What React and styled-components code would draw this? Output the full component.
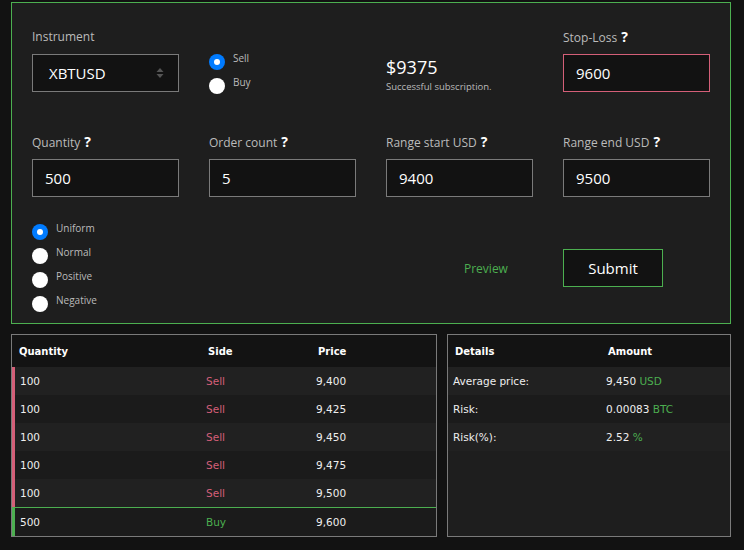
import React from "react";
import styled, { createGlobalStyle } from "styled-components";

const GlobalStyle = createGlobalStyle`
  body {
    margin: 0;
    background-color: #121212;
    font-family: "Open Sans", "Noto Sans", sans-serif;
    color: #eee;
  }
`;

const Page = styled.div`
  padding: 2px 13px 0 11px;
  width: 720px;
`;

const Panel = styled.div`
  border: 1px solid #4caf50;
  background-color: #1e1e1e;
  padding: 25px 20px 7px 20px;
`;

const Row = styled.div`
  display: grid;
  grid-template-columns: repeat(4, 147px);
  column-gap: 30px;
  align-items: start;
  height: ${(props) => (props.h ? `${props.h}px` : "auto")};
  margin-top: ${(props) => props.gap || 0}px;
`;

const Field = styled.div`
  display: flex;
  flex-direction: column;
`;

const Label = styled.div`
  font-size: 12px;
  line-height: 18px;
  height: 18px;
  color: #bbb;
  margin-bottom: 8px;
  white-space: nowrap;
  b {
    color: #fff;
    font-size: 14px;
    font-weight: 700;
    margin-left: 4px;
  }
`;

const Input = styled.div`
  box-sizing: border-box;
  height: 38px;
  border: 1px solid ${(props) => (props.danger ? "#d45f78" : "#7a7a7a")};
  background-color: #121212;
  color: #fff;
  font-size: 15px;
  display: flex;
  align-items: center;
  padding-left: ${(props) => (props.select ? 16 : 12)}px;
  padding-right: 14px;
  justify-content: space-between;
`;

const RadioGroup = styled.div`
  display: flex;
  flex-direction: column;
  margin-top: ${(props) => props.offset || 0}px;
`;

const RadioItem = styled.div`
  display: flex;
  align-items: flex-start;
  height: 24px;
`;

const Dot = styled.span`
  box-sizing: border-box;
  width: 16px;
  height: 16px;
  margin-top: 4px;
  border-radius: 50%;
  background-color: ${(props) => (props.checked ? "#007bff" : "#fff")};
  display: flex;
  align-items: center;
  justify-content: center;
  &::after {
    content: "";
    width: 6px;
    height: 6px;
    border-radius: 50%;
    background: #fff;
    display: ${(props) => (props.checked ? "block" : "none")};
  }
`;

const RadioText = styled.span`
  font-size: 10px;
  line-height: 16px;
  color: #bbb;
  margin-left: 8px;
`;

const PriceBlock = styled.div`
  margin-top: 28px;
`;

const BigPrice = styled.div`
  font-size: 18px;
  line-height: 22px;
  color: #fff;
`;

const Note = styled.div`
  font-size: 9.5px;
  line-height: 14px;
  margin-top: 2px;
  color: #bbb;
`;

const PreviewLink = styled.div`
  align-self: center;
  color: #4caf50;
  font-size: 12px;
  padding-left: 78px;
`;

const SubmitButton = styled.button`
  align-self: center;
  width: 100px;
  height: 38px;
  background-color: #121212;
  border: 1px solid #4caf50;
  color: #fff;
  font-family: "Open Sans", "Noto Sans", sans-serif;
  font-size: 15px;
  padding: 0;
`;

const Bottom = styled.div`
  display: grid;
  grid-template-columns: 426px 284px;
  column-gap: 10px;
  margin-top: 10px;
  font-family: "DejaVu Sans", Verdana, sans-serif;
  font-size: 10.5px;
`;

const TableBox = styled.div`
  border: 1px solid #7a7a7a;
  background-color: #1e1e1e;
  display: flex;
  flex-direction: column;
`;

const HeadRow = styled.div`
  display: grid;
  grid-template-columns: ${(props) => props.cols};
  height: 32px;
  align-items: center;
  background-color: #131313;
  padding-left: 7px;
  font-size: 10px;
  font-weight: 700;
  color: #fff;
`;

const BodyRow = styled.div`
  display: grid;
  grid-template-columns: ${(props) => props.cols};
  align-items: center;
  box-sizing: border-box;
  padding-left: 5px;
  border-left: ${(props) => (props.bar ? `3px solid ${props.bar}` : "none")};
  border-top: ${(props) => (props.split ? "1px solid #4caf50" : "none")};
  height: ${(props) => (props.split ? 29 : 28)}px;
  background-color: ${(props) => (props.odd ? "#212121" : "#1b1b1b")};
  color: #eee;
`;

const Side = styled.span`
  color: ${(props) => (props.buy ? "#4caf50" : "#d45f78")};
`;

const Unit = styled.span`
  color: #4caf50;
`;

const orders = [
  { qty: 100, side: "Sell", price: "9,400" },
  { qty: 100, side: "Sell", price: "9,425" },
  { qty: 100, side: "Sell", price: "9,450" },
  { qty: 100, side: "Sell", price: "9,475" },
  { qty: 100, side: "Sell", price: "9,500" },
  { qty: 500, side: "Buy", price: "9,600" },
];

const details = [
  { name: "Average price:", value: "9,450", unit: "USD" },
  { name: "Risk:", value: "0.00083", unit: "BTC" },
  { name: "Risk(%):", value: "2.52", unit: "%" },
];

function SortArrows() {
  return (
    <svg width="8" height="12" viewBox="0 0 8 12">
      <path d="M4 1 L7.5 5 H0.5 Z" fill="#555" />
      <path d="M4 11 L7.5 7 H0.5 Z" fill="#555" />
    </svg>
  );
}

function Radio({ checked, children }) {
  return (
    <RadioItem>
      <Dot checked={checked} />
      <RadioText>{children}</RadioText>
    </RadioItem>
  );
}

function App() {
  const orderCols = "186px 110px 1fr";
  const orderHead = "189px 110px 1fr";
  return (
    <Page>
      <GlobalStyle />
      <Panel>
        <Row h={64}>
          <Field>
            <Label>Instrument</Label>
            <Input select>
              XBTUSD
              <SortArrows />
            </Input>
          </Field>
          <RadioGroup offset={22}>
            <Radio checked>Sell</Radio>
            <Radio>Buy</Radio>
          </RadioGroup>
          <PriceBlock>
            <BigPrice>$9375</BigPrice>
            <Note>Successful subscription.</Note>
          </PriceBlock>
          <Field>
            <Label>
              Stop-Loss<b>?</b>
            </Label>
            <Input danger>9600</Input>
          </Field>
        </Row>
        <Row gap={41}>
          <Field>
            <Label>
              Quantity<b>?</b>
            </Label>
            <Input>500</Input>
          </Field>
          <Field>
            <Label>
              Order count<b>?</b>
            </Label>
            <Input>5</Input>
          </Field>
          <Field>
            <Label>
              Range start USD<b>?</b>
            </Label>
            <Input>9400</Input>
          </Field>
          <Field>
            <Label>
              Range end USD<b>?</b>
            </Label>
            <Input>9500</Input>
          </Field>
        </Row>
        <Row gap={23}>
          <RadioGroup>
            <Radio checked>Uniform</Radio>
            <Radio>Normal</Radio>
            <Radio>Positive</Radio>
            <Radio>Negative</Radio>
          </RadioGroup>
          <div />
          <PreviewLink>Preview</PreviewLink>
          <SubmitButton>Submit</SubmitButton>
        </Row>
      </Panel>
      <Bottom>
        <TableBox>
          <HeadRow cols={orderHead}>
            <span>Quantity</span>
            <span>Side</span>
            <span>Price</span>
          </HeadRow>
          {orders.map((o, i) => (
            <BodyRow
              key={i}
              cols={orderCols}
              odd={i % 2 === 0}
              bar={o.side === "Buy" ? "#4caf50" : "#d45f78"}
              split={o.side === "Buy"}
            >
              <span>{o.qty}</span>
              <Side buy={o.side === "Buy"}>{o.side}</Side>
              <span>{o.price}</span>
            </BodyRow>
          ))}
        </TableBox>
        <TableBox>
          <HeadRow cols="153px 1fr">
            <span>Details</span>
            <span>Amount</span>
          </HeadRow>
          {details.map((d, i) => (
            <BodyRow key={i} cols="153px 1fr" odd={i % 2 === 0}>
              <span>{d.name}</span>
              <span>
                {d.value} <Unit>{d.unit}</Unit>
              </span>
            </BodyRow>
          ))}
        </TableBox>
      </Bottom>
    </Page>
  );
}

export default App;
